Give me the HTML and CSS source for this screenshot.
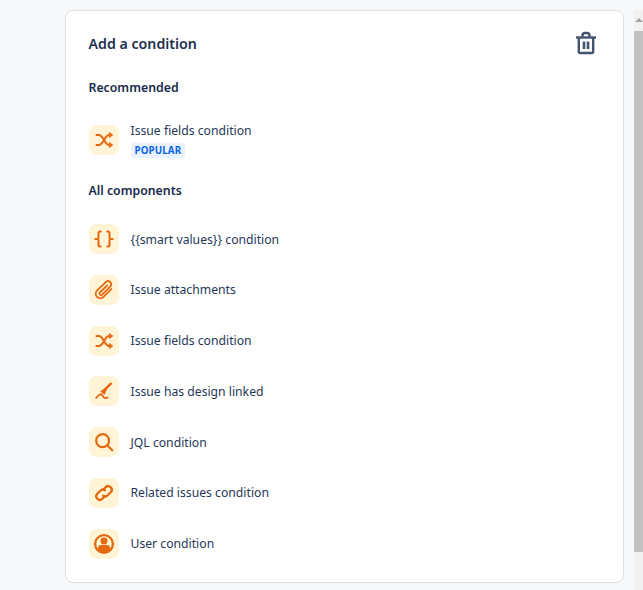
FILE: index.html
```
<!DOCTYPE html>
<html lang="en">
<head>
<meta charset="utf-8">
<title>Add a condition</title>
<link rel="stylesheet" href="styles.css">
</head>
<body>
<main class="page">
  <section class="card">
    <header class="card-head">
      <h1>Add a condition</h1>
      <svg class="trash" viewBox="0 0 24 24" width="24" height="24" fill="none" stroke="#44546f" stroke-width="2.4">
        <path d="M2 6.500h20"/>
        <path d="M8.500 6.500V4a2.500 2.500 0 0 1 2.500-2h2a2.500 2.500 0 0 1 2.500 2v2.500"/>
        <path d="M4.800 6.500v14a1.500 1.500 0 0 0 1.500 1.500h11.400a1.500 1.500 0 0 0 1.500-1.500v-14"/>
        <path d="M10 10.500v7.500M14 10.500v7.500" stroke-width="2.600"/>
      </svg>
    </header>
    <h2 class="sec sec-rec">Recommended</h2>
    <div class="row row-rec">
      <span class="ico"><svg viewBox="0 0 24 24" width="20" height="20"><use href="#shuffle"/></svg></span>
      <div class="stack">
        <span class="label">Issue fields condition</span>
        <span class="badge">POPULAR</span>
      </div>
    </div>
    <h2 class="sec sec-all">All components</h2>
    <div class="list">
      <div class="row"><span class="ico"><svg viewBox="0 0 24 24" width="24" height="24" fill="none" stroke="#e56910" stroke-width="2"><path d="M9.500 4.500H8A1.500 1.500 0 0 0 6.500 6v4.500A1.500 1.500 0 0 1 5 12H2.500 5a1.500 1.500 0 0 1 1.500 1.500V18A1.500 1.500 0 0 0 8 19.500h1.500"/><path d="M14.500 4.500H16A1.500 1.500 0 0 1 17.500 6v4.500A1.500 1.500 0 0 0 19 12h2.500H19a1.500 1.500 0 0 0-1.500 1.500V18a1.500 1.500 0 0 1-1.500 1.500h-1.500"/></svg></span><span class="label label-low">{{smart values}} condition</span></div>
      <div class="row"><span class="ico"><svg viewBox="0 0 24 24" width="22" height="22" fill="none" stroke="#e56910" stroke-width="2" stroke-linecap="round"><path d="M20 11 11.500 19.500a4.800 4.800 0 0 1-7-7L14 3.500a3.300 3.300 0 0 1 5 4.500L10 17a1.600 1.600 0 0 1-2.500-2.300L15.500 7"/></svg></span><span class="label">Issue attachments</span></div>
      <div class="row"><span class="ico"><svg viewBox="0 0 24 24" width="20" height="20"><use href="#shuffle"/></svg></span><span class="label">Issue fields condition</span></div>
      <div class="row"><span class="ico"><svg viewBox="0 0 24 24" width="22" height="22" fill="none" stroke="#e56910" stroke-width="2" stroke-linecap="round"><path d="M19.500 4 14 9.500" stroke-width="2.600"/><path d="M14 8.500 8.500 12.500l4 3 2.500-6z" fill="#e56910" stroke-width="1"/><path d="M3.500 19.500c1.500-1 2.500-4 5-4 2.500 0 2 3.500 4 4 1 .3 2.500 0 3.500-.5"/></svg></span><span class="label label-low">Issue has design linked</span></div>
      <div class="row"><span class="ico"><svg viewBox="0 0 24 24" width="22" height="22" fill="none" stroke="#e56910" stroke-width="2.400" stroke-linecap="round"><circle cx="10.500" cy="10.500" r="7"/><path d="m15.800 15.800 5.200 5.200"/></svg></span><span class="label label-low">JQL condition</span></div>
      <div class="row"><span class="ico"><svg viewBox="0 0 24 24" width="22" height="22" fill="none" stroke="#e56910" stroke-width="2.500" stroke-linecap="round"><path d="M11 8.500 14 5.500a3.900 3.900 0 0 1 5.500 5.500L16 14.500a3.900 3.900 0 0 1-5 .5"/><path d="M13 15.500 10 18.500a3.900 3.900 0 0 1-5.500-5.500L8 9.500a3.900 3.900 0 0 1 5-.5"/></svg></span><span class="label">Related issues condition</span></div>
      <div class="row"><span class="ico"><svg viewBox="0 0 24 24" width="22" height="22" fill="none" stroke="#e56910" stroke-width="2.500"><circle cx="12" cy="12" r="9.700"/><circle cx="12" cy="8.800" r="3.800" fill="#e56910" stroke="none"/><path d="M5.500 18.500v-2a3.500 3.500 0 0 1 3.500-3.500h6a3.500 3.500 0 0 1 3.500 3.500v2a9.500 9.500 0 0 1-13 0z" fill="#e56910" stroke="none"/></svg></span><span class="label">User condition</span></div>
    </div>
  </section>
</main>
<div class="scrollbar" aria-hidden="true">
  <span class="arrow"></span>
  <span class="thumb"></span>
</div>
<svg class="defs" width="0" height="0"><defs>
  <g id="shuffle" fill="none" stroke="#e56910" stroke-width="2.400">
    <path d="M2 6h4c3 0 4 3 6 6s3 6 6 6h3"/>
    <path d="M2 18h4c3 0 4-3 6-6s3-6 6-6h3"/>
    <path d="M18.500 3 22.500 6l-4 3zM18.500 15l4 3-4 3z" fill="#e56910" stroke-width="1"/>
  </g>
</defs></svg>
</body>
</html>
```
FILE: styles.css
```
* { box-sizing: border-box; }
html, body { margin: 0; height: 590px; overflow: hidden; }
body {
  display: flex;
  background: #f7f8f9;
  color: #172b4d;
  font-family: "Noto Sans", "Open Sans", sans-serif;
}
.page { flex: 1; padding: 10px 10px 8px 65px; }
.card {
  width: 559px;
  height: 573px;
  background: #fff;
  border: 1px solid #dcdfe4;
  border-radius: 8px;
  padding: 0 22.500px;
}
.card-head {
  display: flex;
  justify-content: space-between;
  align-items: center;
  padding-top: 16px;
  height: 48px;
  padding-right: 3px;
}
h1 { margin: 2px 0 0; font-size: 14.200px; font-weight: 600; line-height: 28px; color: #1d2f4e; }
.trash { display: block; }
.sec { margin: 0; font-size: 12.300px; font-weight: 600; line-height: 20px; }
.sec-rec { margin-top: 19px; }
.sec-all { margin-top: 26px; }
.row { display: flex; align-items: center; gap: 12px; height: 30px; }
.row-rec { margin-top: 27px; }
.list { display: flex; flex-direction: column; gap: 20.800px; margin-top: 23px; }
.ico {
  flex: none;
  width: 30px;
  height: 30px;
  border-radius: 8px;
  background: #fff4d6;
  display: flex;
  align-items: center;
  justify-content: center;
}
.stack { display: flex; flex-direction: column; align-items: flex-start; gap: 4px; margin-top: 0; }
.label { font-size: 12.200px; line-height: 16px; color: #253858; white-space: nowrap; }
.label-low { margin-top: 2px; }
.badge {
  font-size: 9.800px;
  font-weight: 700;
  line-height: 15px;
  padding: 0 4px;
  border-radius: 3px;
  color: #0c66e4;
  background: #e9f2ff;
  letter-spacing: .1px;
}
.scrollbar {
  flex: none;
  width: 9px;
  margin-top: 10px;
  height: 580px;
  background: #f1f1f1;
  display: flex;
  flex-direction: column;
  align-items: center;
}
.arrow {
  margin-top: 8px;
  width: 0;
  height: 0;
  border: 4px solid transparent;
  border-top: 0;
  border-bottom: 4px solid #a3a3a3;
}
.thumb { margin-top: 9px; width: 100%; height: 521px; background: #c1c1c1; }
.defs { position: absolute; }
```
